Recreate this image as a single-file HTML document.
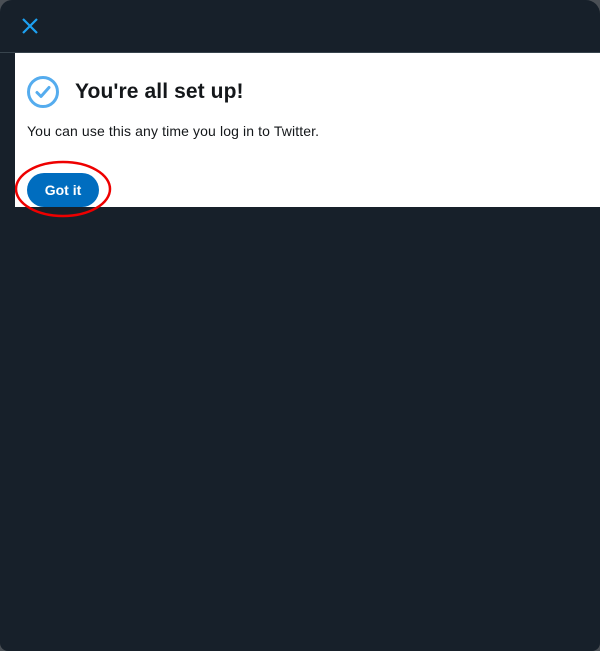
<!DOCTYPE html>
<html><head><style>
html,body{margin:0;padding:0;width:600px;height:651px;background:#4a4f55;overflow:hidden}
.m{position:absolute;left:0;top:0;width:600px;height:651px;background:#17202a;border-radius:12px 14px 8px 8px;overflow:hidden;font-family:"Liberation Sans",sans-serif}
.hd{position:absolute;left:0;top:0;width:600px;height:52px;border-bottom:1px solid #38444d}
.p{position:absolute;left:15px;top:53px;width:585px;height:154px;background:#fff}
h1{position:absolute;left:60px;top:27px;margin:0;font-size:21px;font-weight:bold;color:#14171a;letter-spacing:0.1px}
.t{position:absolute;left:12px;top:70px;font-size:14px;color:#14171a;letter-spacing:0.12px}
.b{position:absolute;left:12px;top:120px;width:72px;height:34px;border-radius:17px;background:#006dbf;color:#fff;font-weight:bold;font-size:14px;text-align:center;line-height:35px}
</style></head><body><div class="m">
<div class="hd"><svg style="position:absolute;left:21px;top:17px" width="18" height="18" viewBox="0 0 18 18"><path d="M2 2L16 16M16 2L2 16" stroke="#1da1f2" stroke-width="2.2"/></svg></div>
<div class="p">
<svg style="position:absolute;left:11px;top:22px" width="34" height="34" viewBox="0 0 34 34"><circle cx="17" cy="17" r="14.5" fill="none" stroke="#55acee" stroke-width="3"/><path d="M11 17.5l4 4 8-9" fill="none" stroke="#55acee" stroke-width="3" stroke-linecap="round" stroke-linejoin="round"/></svg>
<h1>You're all set up!</h1>
<div class="t">You can use this any time you log in to Twitter.</div>
<div class="b">Got it</div>
</div>
<svg style="position:absolute;left:15px;top:160px" width="100" height="58"><ellipse cx="48" cy="29" rx="47" ry="27" fill="none" stroke="#e00" stroke-width="2.5"/></svg>
</div></body></html>
